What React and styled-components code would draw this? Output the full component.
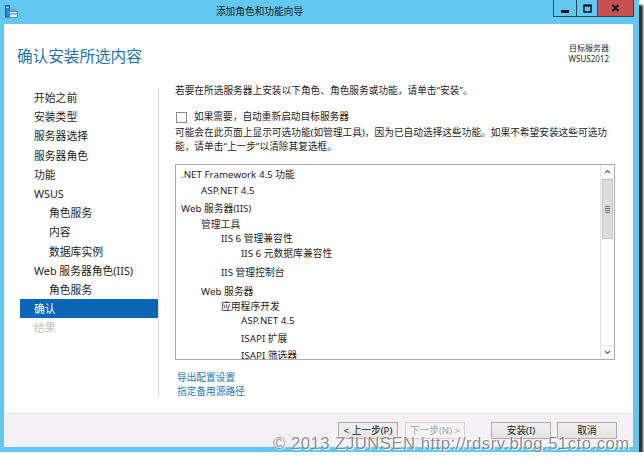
import React from 'react';
import styled, { createGlobalStyle } from 'styled-components';

const colors = {
  frame: '#62c8ef',
  close: '#c75050',
  heading: '#1f74a7',
  link: '#1d78b4',
  text: '#1e1e1e',
  active: '#0a66b5',
  muted: '#c2c2c2',
  footer: '#f4f0f4',
};

const GlobalStyle = createGlobalStyle`
  html, body {
    margin: 0;
    padding: 0;
    background: #fff;
  }
  body {
    font-family: "Noto Sans", "Noto Sans CJK SC", sans-serif;
    color: ${colors.text};
  }
`;

const Window = styled.div`
  position: relative;
  width: 639px;
  height: 452px;
  box-sizing: border-box;
  display: flex;
  flex-direction: column;
  background: ${colors.frame};
  padding: 0 6px 5px 4px;
  box-shadow: 4px 5px 2px #2e2e2e;
`;

const TitleBar = styled.div`
  height: 24px;
  flex-shrink: 0;
  display: flex;
  align-items: flex-start;
`;

const AppIcon = styled.svg`
  margin: 5px 0 0 1px;
  flex-shrink: 0;
`;

const Caption = styled.div`
  flex: 1;
  text-align: center;
  padding-right: 53px;
  font-size: 9.7px;
  line-height: 24px;
  color: #1a1a1a;
`;

const CaptionButtons = styled.div`
  display: flex;
  margin-right: -1px;
`;

const CaptionButton = styled.div`
  width: ${(p) => p.$w}px;
  height: 17px;
  box-sizing: border-box;
  border: 1px solid #2c4450;
  border-top: none;
  margin-left: -1px;
  background: ${(p) => (p.$close ? colors.close : 'transparent')};
  display: flex;
  align-items: center;
  justify-content: center;
`;

const Client = styled.div`
  flex: 1;
  min-height: 0;
  display: flex;
  flex-direction: column;
  background: #fff;
`;

const Header = styled.header`
  height: 60px;
  flex-shrink: 0;
  display: flex;
  justify-content: space-between;
  padding: 0 24px 0 13px;
`;

const PageTitle = styled.h1`
  margin: 0;
  padding-top: 22px;
  font-size: 15.6px;
  line-height: 20px;
  font-weight: normal;
  color: ${colors.heading};
`;

const ServerInfo = styled.div`
  padding-top: 18px;
  text-align: right;
  font-size: 8px;
  line-height: 11px;
  color: #2a2a2a;
`;

const Body = styled.div`
  flex: 1;
  min-height: 0;
  display: flex;
`;

const Sidebar = styled.nav`
  width: 155px;
  box-sizing: border-box;
  flex-shrink: 0;
  margin: 4px 0 16px;
  padding-left: 16px;
  border-right: 1px solid #dedede;
`;

const NavItem = styled.div`
  height: 19.2px;
  line-height: 19.2px;
  padding-left: ${(p) => (p.$sub ? 29 : 14)}px;
  font-size: 10.8px;
  white-space: nowrap;
  background: ${(p) => (p.$active ? colors.active : 'transparent')};
  color: ${(p) => (p.$active ? '#fff' : p.$disabled ? colors.muted : colors.text)};
`;

const Content = styled.section`
  flex: 1;
  min-width: 0;
  display: flex;
  flex-direction: column;
  padding: 0 18px 14px 16px;
  font-size: 9.7px;
  line-height: 14px;
`;

const Text = styled.p`
  margin: ${(p) => p.$top || 0}px 0 0;
`;

const CheckRow = styled.label`
  margin-top: 12px;
  height: 14px;
  display: flex;
  align-items: center;
  gap: 7px;
  padding-left: 1px;
`;

const CheckBox = styled.span`
  width: 11px;
  height: 11px;
  box-sizing: border-box;
  border: 1px solid #8a8a8a;
  background: #fff;
`;

const ListBox = styled.div`
  margin-top: 10px;
  height: 196px;
  box-sizing: border-box;
  border: 1px solid #acacac;
  display: flex;
`;

const Tree = styled.div`
  flex: 1;
  overflow: hidden;
  padding: 3px 0 0 5px;
  font-size: 9.8px;
  line-height: 14.6px;
`;

const TreeRow = styled.div`
  margin-top: ${(p) => p.$gap}px;
  padding-left: ${(p) => p.$level * 20}px;
  white-space: nowrap;
`;

const ScrollBar = styled.div`
  width: 14px;
  flex-shrink: 0;
  box-sizing: border-box;
  border-left: 1px solid #e2e2e2;
  display: flex;
  flex-direction: column;
`;

const ScrollArrow = styled.div`
  height: 13px;
  display: flex;
  align-items: center;
  justify-content: center;
`;

const ScrollTrack = styled.div`
  flex: 1;
  border-top: 1px solid #e8e8e8;
  border-bottom: 1px solid #e8e8e8;
`;

const Thumb = styled.div`
  height: 60px;
  box-sizing: border-box;
  margin: 0 1px;
  background: #dcdcdc;
  border: 1px solid #c4c4c4;
  display: flex;
  flex-direction: column;
  align-items: center;
  justify-content: center;
  gap: 1px;
`;

const Grip = styled.span`
  width: 5px;
  height: 1px;
  background: #6c6c6c;
`;

const Links = styled.div`
  margin-top: 11px;
  display: flex;
  flex-direction: column;
  padding-left: 2px;
`;

const Link = styled.a`
  color: ${colors.link};
  text-decoration: none;
`;

const Footer = styled.footer`
  height: 34px;
  flex-shrink: 0;
  box-sizing: border-box;
  border-top: 1px solid #e4e0e4;
  background: ${colors.footer};
  display: flex;
  align-items: center;
  justify-content: flex-end;
  padding-right: 16px;
`;

const Button = styled.button`
  width: 60px;
  height: 17px;
  margin-left: ${(p) => p.$gap}px;
  padding: 0;
  box-sizing: border-box;
  font-family: inherit;
  font-size: 9.7px;
  line-height: 15px;
  color: ${(p) => (p.disabled ? '#a4a4a4' : '#1a1a1a')};
  border: 1px solid ${(p) => (p.disabled ? '#d2d2d2' : '#acacac')};
  background: ${(p) =>
    p.disabled ? '#f4f4f4' : 'linear-gradient(#f0f0f0, #e3e3e3)'};
`;

const Watermark = styled.div`
  position: absolute;
  left: 273px;
  top: 435px;
  font-family: "Liberation Sans", Arial, sans-serif;
  font-size: 16.7px;
  line-height: 17px;
  letter-spacing: 0.5px;
  white-space: nowrap;
  color: rgba(120, 120, 120, 0.85);
  text-shadow: 1px 1px 0 rgba(255, 255, 255, 0.9), -1px -1px 0 rgba(255, 255, 255, 0.6);
  pointer-events: none;
`;

const navItems = [
  { label: '开始之前' },
  { label: '安装类型' },
  { label: '服务器选择' },
  { label: '服务器角色' },
  { label: '功能' },
  { label: 'WSUS' },
  { label: '角色服务', sub: true },
  { label: '内容', sub: true },
  { label: '数据库实例', sub: true },
  { label: 'Web 服务器角色(IIS)' },
  { label: '角色服务', sub: true },
  { label: '确认', active: true },
  { label: '结果', disabled: true },
];

// label, indent level, extra gap above
const treeItems = [
  ['.NET Framework 4.5 功能', 0, 0],
  ['ASP.NET 4.5', 1, 1],
  ['Web 服务器(IIS)', 0, 4],
  ['管理工具', 1, 1],
  ['IIS 6 管理兼容性', 2, 0],
  ['IIS 6 元数据库兼容性', 3, 0],
  ['IIS 管理控制台', 2, 4],
  ['Web 服务器', 1, 5],
  ['应用程序开发', 2, 0],
  ['ASP.NET 4.5', 3, 0],
  ['ISAPI 扩展', 3, 3],
  ['ISAPI 筛选器', 3, 2],
];

function WizardIcon() {
  return (
    <AppIcon width='13' height='13' viewBox='0 0 13 13'>
      <rect x='0.5' y='0.5' width='4' height='11.5' fill='#2f86d6' stroke='#1d5fa6' />
      <rect x='1.5' y='2' width='2' height='1' fill='#fff' />
      <rect x='6.5' y='5' width='3.5' height='2' fill='none' stroke='#6b8aa4' />
      <rect x='4.5' y='6.5' width='8' height='6' fill='#e9eff4' stroke='#6b8aa4' />
      <rect x='4.5' y='8.5' width='8' height='1' fill='#2f86d6' />
    </AppIcon>
  );
}

function Chevron({ up }) {
  return (
    <svg width='7' height='5' viewBox='0 0 7 5'>
      <path
        d={up ? 'M1 4 L3.5 1.5 L6 4' : 'M1 1 L3.5 3.5 L6 1'}
        fill='none'
        stroke='#606060'
        strokeWidth='1.2'
      />
    </svg>
  );
}

export default function App() {
  return (
    <>
      <GlobalStyle />
      <Window>
        <TitleBar>
          <WizardIcon />
          <Caption>添加角色和功能向导</Caption>
          <CaptionButtons>
            <CaptionButton $w={24}>
              <svg width='9' height='9' viewBox='0 0 9 9'>
                <rect x='0' y='6' width='8' height='3' fill='#111' />
              </svg>
            </CaptionButton>
            <CaptionButton $w={22}>
              <svg width='9' height='9' viewBox='0 0 9 9'>
                <rect x='1' y='1.5' width='7' height='6.5' fill='none' stroke='#111' strokeWidth='1.5' />
                <rect x='0.5' y='0.5' width='8' height='2' fill='#111' />
              </svg>
            </CaptionButton>
            <CaptionButton $w={37} $close>
              <svg width='9' height='8' viewBox='0 0 9 8'>
                <path d='M1.5 1 L7.5 7 M7.5 1 L1.5 7' stroke='#111' strokeWidth='2' />
              </svg>
            </CaptionButton>
          </CaptionButtons>
        </TitleBar>

        <Client>
          <Header>
            <PageTitle>确认安装所选内容</PageTitle>
            <ServerInfo>
              <div>目标服务器</div>
              <div>WSUS2012</div>
            </ServerInfo>
          </Header>

          <Body>
            <Sidebar>
              {navItems.map((item, i) => (
                <NavItem
                  key={i}
                  $sub={item.sub}
                  $active={item.active}
                  $disabled={item.disabled}>
                  {item.label}
                </NavItem>
              ))}
            </Sidebar>

            <Content>
              <Text>若要在所选服务器上安装以下角色、角色服务或功能，请单击“安装”。</Text>
              <CheckRow>
                <CheckBox />
                如果需要，自动重新启动目标服务器
              </CheckRow>
              <Text $top={2}>
                可能会在此页面上显示可选功能(如管理工具)，因为已自动选择这些功能。如果不希望安装这些可选功能，请单击“上一步”以清除其复选框。
              </Text>

              <ListBox>
                <Tree>
                  {treeItems.map(([label, level, gap], i) => (
                    <TreeRow key={i} $level={level} $gap={gap}>
                      {label}
                    </TreeRow>
                  ))}
                </Tree>
                <ScrollBar>
                  <ScrollArrow>
                    <Chevron up />
                  </ScrollArrow>
                  <ScrollTrack>
                    <Thumb>
                      <Grip />
                      <Grip />
                      <Grip />
                      <Grip />
                    </Thumb>
                  </ScrollTrack>
                  <ScrollArrow>
                    <Chevron />
                  </ScrollArrow>
                </ScrollBar>
              </ListBox>

              <Links>
                <Link href='#'>导出配置设置</Link>
                <Link href='#'>指定备用源路径</Link>
              </Links>
            </Content>
          </Body>

          <Footer>
            <Button $gap={0}>&lt; 上一步(P)</Button>
            <Button $gap={7} disabled>
              下一步(N) &gt;
            </Button>
            <Button $gap={26}>安装(I)</Button>
            <Button $gap={6}>取消</Button>
          </Footer>
        </Client>

        <Watermark>© 2013 ZJUNSEN http://rdsrv.blog.51cto.com</Watermark>
      </Window>
    </>
  );
}
